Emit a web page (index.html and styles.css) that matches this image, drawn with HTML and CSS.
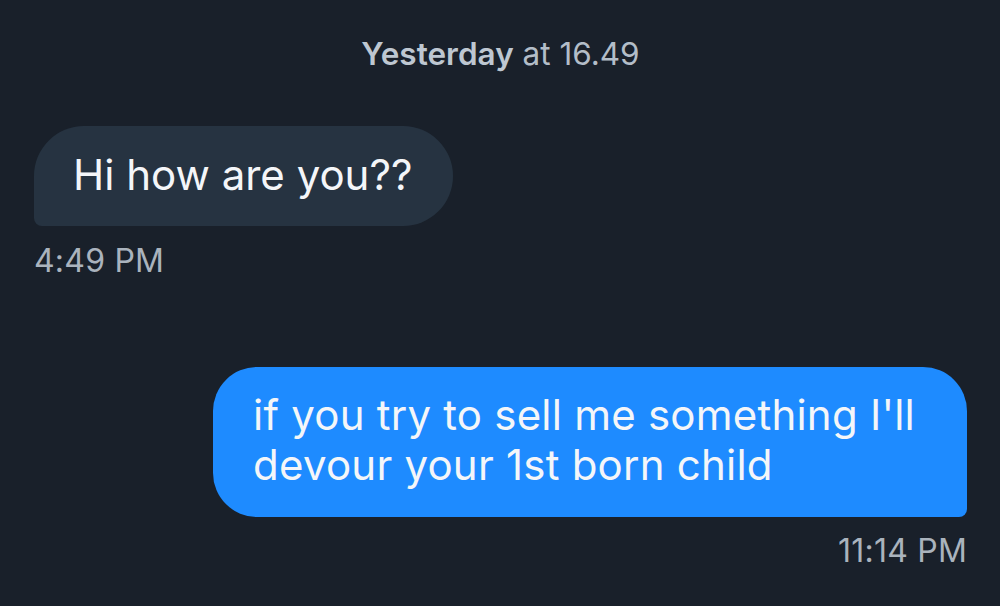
FILE: index.html
```html
<!DOCTYPE html>
<html>
<head>
<meta charset="utf-8">
<link rel="stylesheet" href="styles.css">
</head>
<body>
<div class="chat">
  <div class="day"><b>Yesterday</b> at 16.49</div>
  <div class="msg in">
    <div class="bubble">Hi how are you??</div>
    <div class="time">4:49 PM</div>
  </div>
  <div class="msg out">
    <div class="bubble">if you try to sell me something I'll<br>devour your 1st born child</div>
    <div class="time">11:14 PM</div>
  </div>
</div>
</body>
</html>
```

FILE: styles.css
```css
html, body {
  margin: 0;
  padding: 0;
  background: #19202a;
  width: 1000px;
  height: 606px;
  overflow: hidden;
}
.chat {
  display: flex;
  flex-direction: column;
  padding: 34px 33px 0 34px;
  font-family: Inter, "Noto Sans", sans-serif;
}
.day {
  text-align: center;
  color: #b3bdc8;
  font-size: 31.5px;
  line-height: 40px;
}
.day b { font-weight: 600; color: #bec7d1; }
.msg {
  display: flex;
  flex-direction: column;
}
.msg.in {
  align-items: flex-start;
  margin-top: 52px;
}
.msg.out {
  align-items: flex-end;
  margin-top: 88px;
}
.bubble {
  color: #f4f6f9;
  font-size: 42px;
  line-height: 50px;
}
.in .bubble {
  background: #263341;
  padding: 24px 41px 26px 39px;
  border-radius: 50px 50px 50px 8px;
}
.out .bubble {
  background: #1e8bff;
  letter-spacing: 0.22px;
  padding: 23px 52px 27px 40px;
  border-radius: 44px 44px 8px 44px;
}
.time {
  color: #aab3bd;
  font-size: 32px;
  line-height: 36px;
  margin-top: 17px;
  letter-spacing: 0.2px;
}
.out .time {
  margin-top: 16px;
}
```
